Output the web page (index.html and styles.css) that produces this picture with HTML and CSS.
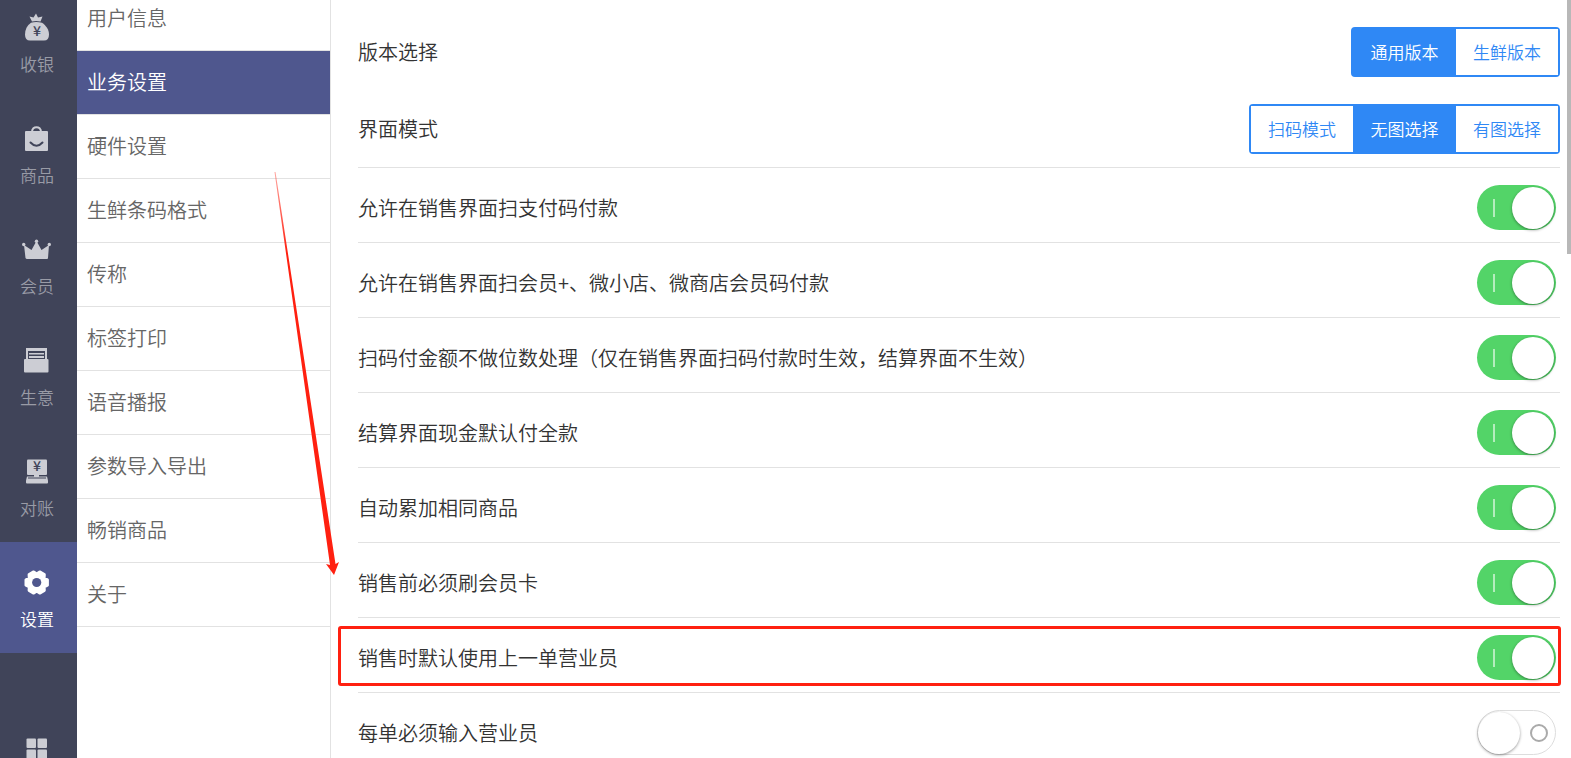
FILE: index.html
```html
<!DOCTYPE html>
<html lang="zh-CN">
<head>
    <meta charset="UTF-8">
    <meta name="viewport" content="width=device-width, initial-scale=1.0">
    <title>业务设置</title>
    <link rel="stylesheet" href="styles.css">
</head>
<body>
    <div class="app">
        <!-- 主导航 -->
        <nav class="sidebar">
            <a href="#" class="nav-item">
                <svg class="nav-icon" viewBox="0 0 30 30">
                    <path d="M10 9.500 L7.500 4.500 L11.500 5.500 L14 1.500 L16 5.500 L20.500 4.500 L18.500 9.500 Q14 8.500 10 9.500 Z"/>
                    <path d="M9 10.700 Q14 9.500 20 10.700 C24 13.500 27 17.500 27 22.500 Q27 28.500 22 28.500 H8 Q3 28.500 3 22.500 C3 17.500 5 13.500 9 10.700 Z"/>
                    <text class="yen" x="15" y="24">¥</text>
                </svg>
                <span>收银</span>
            </a>
            <a href="#" class="nav-item">
                <svg class="nav-icon" viewBox="0 0 30 30">
                    <rect x="3" y="8" width="23" height="20" rx="1"/>
                    <path class="light-line" d="M10 9 C10 2.500 19 2.500 19 9"/>
                    <path class="dark-line" d="M8.500 19.500 Q14.500 26 20.500 19.500"/>
                </svg>
                <span>商品</span>
            </a>
            <a href="#" class="nav-item">
                <svg class="nav-icon" viewBox="0 0 30 30">
                    <path d="M2 11 L9.500 16 L14.500 7 L19.500 16 L27 11 L26 24 Q26 25 25 25 H5 Q4 25 3.500 24 Z"/>
                    <circle cx="1.700" cy="10.500" r="1.700"/>
                    <circle cx="14.500" cy="7.200" r="1.700"/>
                    <circle cx="27.300" cy="10.500" r="1.700"/>
                </svg>
                <span>会员</span>
            </a>
            <a href="#" class="nav-item">
                <svg class="nav-icon" viewBox="0 0 30 30">
                    <rect x="4" y="3" width="21" height="12"/>
                    <rect class="dark" x="6" y="6" width="17" height="8"/>
                    <rect x="7" y="8" width="15" height="1.500"/>
                    <rect x="7" y="11" width="15" height="2"/>
                    <rect x="2" y="14" width="24.500" height="13.500" rx="1"/>
                </svg>
                <span>生意</span>
            </a>
            <a href="#" class="nav-item">
                <svg class="nav-icon" viewBox="0 0 30 30">
                    <rect x="5" y="3.500" width="20" height="15.500" rx="1"/>
                    <rect x="12" y="18" width="5" height="5"/>
                    <path d="M5 20.500 H25 L26 24.500 V26.500 Q26 27.500 25 27.500 H5 Q4 27.500 4 26.500 V24.500 Z"/>
                    <path class="thin-line" d="M6 22 H24"/>
                    <text class="yen" x="15" y="15">¥</text>
                </svg>
                <span>对账</span>
            </a>
            <a href="#" class="nav-item active">
                <svg class="nav-icon" viewBox="0 0 30 30">
                    <path class="gear" d="M25.400 12.800 V18.200 L22.100 19.800 L22.300 23.400 L17.700 26.100 L14.700 24 L11.700 26.100 L7.100 23.400 L7.300 19.800 L4 18.200 V12.800 L7.300 11.200 L7.100 7.600 L11.700 4.900 L14.700 7 L17.700 4.900 L22.300 7.600 L22.100 11.200 Z"/>
                    <circle class="dark" cx="14.700" cy="15.500" r="4.600"/>
                </svg>
                <span>设置</span>
            </a>
            <a href="#" class="nav-item nav-more" aria-label="更多">
                <svg class="nav-icon" viewBox="0 0 30 30">
                    <rect x="4.500" y="5.500" width="9.500" height="9.500" rx="1"/>
                    <rect x="15.500" y="5.500" width="9.500" height="9.500" rx="1"/>
                    <rect x="4.500" y="16.500" width="9.500" height="9.500" rx="1"/>
                    <rect x="15.500" y="16.500" width="9.500" height="9.500" rx="1"/>
                </svg>
            </a>
        </nav>

        <!-- 设置菜单 -->
        <nav class="menu">
            <a href="#" class="menu-item">用户信息</a>
            <a href="#" class="menu-item active">业务设置</a>
            <a href="#" class="menu-item">硬件设置</a>
            <a href="#" class="menu-item">生鲜条码格式</a>
            <a href="#" class="menu-item">传称</a>
            <a href="#" class="menu-item">标签打印</a>
            <a href="#" class="menu-item">语音播报</a>
            <a href="#" class="menu-item">参数导入导出</a>
            <a href="#" class="menu-item">畅销商品</a>
            <a href="#" class="menu-item">关于</a>
        </nav>

        <main class="content">
            <div class="mode-row">
                <span>版本选择</span>
                <div class="segment">
                    <button type="button" class="selected">通用版本</button>
                    <button type="button">生鲜版本</button>
                </div>
            </div>
            <div class="mode-row last">
                <span>界面模式</span>
                <div class="segment">
                    <button type="button">扫码模式</button>
                    <button type="button" class="selected">无图选择</button>
                    <button type="button">有图选择</button>
                </div>
            </div>

            <label class="row">
                <span>允许在销售界面扫支付码付款</span>
                <input type="checkbox" class="switch" checked>
            </label>
            <label class="row">
                <span>允许在销售界面扫会员+、微小店、微商店会员码付款</span>
                <input type="checkbox" class="switch" checked>
            </label>
            <label class="row">
                <span>扫码付金额不做位数处理（仅在销售界面扫码付款时生效，结算界面不生效）</span>
                <input type="checkbox" class="switch" checked>
            </label>
            <label class="row">
                <span>结算界面现金默认付全款</span>
                <input type="checkbox" class="switch" checked>
            </label>
            <label class="row">
                <span>自动累加相同商品</span>
                <input type="checkbox" class="switch" checked>
            </label>
            <label class="row">
                <span>销售前必须刷会员卡</span>
                <input type="checkbox" class="switch" checked>
            </label>
            <label class="row highlight">
                <span>销售时默认使用上一单营业员</span>
                <input type="checkbox" class="switch" checked>
            </label>
            <label class="row">
                <span>每单必须输入营业员</span>
                <input type="checkbox" class="switch">
            </label>
            <div class="scroll-thumb"></div>
        </main>

        <!-- 红色指引箭头 -->
        <svg class="arrow" viewBox="0 0 70 410">
            <defs>
                <linearGradient id="fade" x1="0" y1="0" x2="0" y2="1">
                    <stop offset="0" stop-color="#ff2010" stop-opacity="0.4"/>
                    <stop offset="0.2" stop-color="#ff2010"/>
                </linearGradient>
            </defs>
            <path fill="url(#fade)" d="M4.500 2 L5.500 2 L65.500 394 L69 392 L64 405 L56 394 L60 395 Z"/>
        </svg>
    </div>
</body>
</html>
```
FILE: styles.css
```css
* {
    box-sizing: border-box;
}
body {
    margin: 0;
    font-family: "Noto Sans CJK SC", sans-serif;
    font-weight: 350;
    font-size: 20px;
    line-height: 28px;
    color: #333;
    background-color: #fff;
}
a {
    text-decoration: none;
}
.app {
    position: relative;
    display: flex;
    height: 100vh;
    overflow: hidden;
}

/* 主导航 */
.sidebar {
    flex: none;
    width: 77px;
    background-color: #404459;
}
.nav-item {
    display: flex;
    flex-direction: column;
    align-items: center;
    gap: 10px;
    height: 111px;
    padding: 25px 3px 0 0;
    font-size: 17px;
    line-height: 24px;
    color: #999ba6;
}
.nav-item:first-child,
.menu-item:first-child {
    margin-top: -13px;
}
.nav-item.active {
    background-color: #4f578e;
    color: #fff;
}
.nav-more {
    margin-top: 55px;
}
.nav-icon {
    flex: none;
    width: 30px;
    height: 30px;
    fill: #cccdd4;
}
.active .nav-icon {
    fill: #fff;
}
.nav-icon .dark {
    fill: #404459;
}
.active .nav-icon .dark {
    fill: #4f578e;
}
.gear {
    stroke: #fff;
    stroke-width: 3;
    stroke-linejoin: round;
}
.light-line {
    fill: none;
    stroke: #cccdd4;
    stroke-width: 2;
}
.dark-line {
    fill: none;
    stroke: #404459;
    stroke-width: 2;
    stroke-linecap: round;
}
.thin-line {
    stroke: #404459;
    stroke-width: 1;
}
.yen {
    fill: #404459;
    font-size: 14px;
    font-weight: 500;
    text-anchor: middle;
}

/* 设置菜单 */
.menu {
    flex: none;
    width: 254px;
    border-right: 1px solid #e2e2e2;
}
.menu-item {
    display: block;
    height: 64px;
    padding-left: 10px;
    border-bottom: 1px solid #e2e2e2;
    line-height: 62px;
    color: #666;
}
.menu-item.active {
    background-color: #4f578e;
    color: #fff;
}

/* 设置内容 */
.content {
    position: relative;
    flex: 1;
    padding: 13px 11px 0 27px;
}
.mode-row,
.row {
    display: flex;
    justify-content: space-between;
    align-items: center;
}
.mode-row {
    height: 77px;
}
.mode-row.last {
    height: 78px;
    border-bottom: 1px solid #e2e2e2;
}
.segment {
    display: flex;
    border: 2px solid #2f88f5;
    border-radius: 4px;
    background-color: #2f88f5;
}
.segment button {
    width: 102px;
    height: 46px;
    padding: 0;
    border: none;
    background-color: #fff;
    color: #2f88f5;
    font-family: inherit;
    font-weight: inherit;
    font-size: 17px;
    cursor: pointer;
}
.segment button.selected {
    width: 103px;
    background-color: #2f88f5;
    color: #fff;
}
.row {
    position: relative;
    padding: 17px 4px 12px 0;
    border-bottom: 1px solid #e2e2e2;
    cursor: pointer;
}
.highlight::after {
    content: "";
    position: absolute;
    top: 8px;
    right: -1px;
    bottom: 6px;
    left: -20px;
    border: 3px solid #ff2010;
    border-radius: 3px;
}

/* 开关 */
.switch {
    appearance: none;
    display: flex;
    align-items: center;
    justify-content: space-between;
    width: 79px;
    height: 45px;
    margin: 0;
    padding: 0 2px 0 16px;
    border-radius: 23px;
    background-color: #53d468;
    cursor: pointer;
}
.switch::before {
    content: "";
    width: 2px;
    height: 18px;
    background-color: #b4edbd;
}
.switch::after {
    content: "";
    width: 42px;
    height: 42px;
    border-radius: 50%;
    background-color: #fff;
    box-shadow: 0 1px 3px rgba(0, 0, 0, 0.4);
}
.switch:not(:checked) {
    flex-direction: row-reverse;
    padding: 0 7px 0 0;
    border: 1px solid #ddd;
    background-color: #fff;
}
.switch:not(:checked)::before {
    width: 14px;
    height: 14px;
    border: 2px solid #aaa;
    border-radius: 50%;
    background-color: transparent;
}

.scroll-thumb {
    position: absolute;
    top: 0;
    right: 0;
    width: 4px;
    height: 254px;
    background-color: #b8b8b8;
}
.arrow {
    position: absolute;
    top: 170px;
    left: 270px;
    width: 70px;
    height: 410px;
    pointer-events: none;
}
```
